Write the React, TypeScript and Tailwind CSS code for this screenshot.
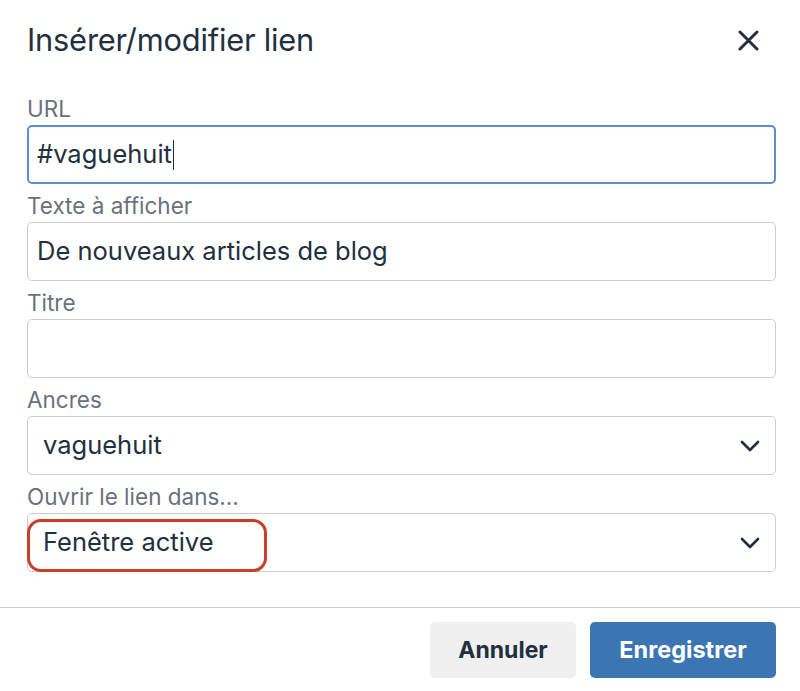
import React from 'react';

const font = { fontFamily: 'Inter, "Noto Sans", "Liberation Sans", sans-serif' };

function Chevron() {
  return (
    <svg width="20" height="12" viewBox="0 0 20 12" fill="none" className="shrink-0">
      <polyline points="2,2 10,10 18,2" stroke="#222f3e" strokeWidth="2.6" strokeLinecap="round" strokeLinejoin="round" />
    </svg>
  );
}

function Label({ children }: { children: React.ReactNode }) {
  return (
    <div className="pt-[8px] pb-[2px] text-[22.5px] leading-[28px] text-[#6a717b]">{children}</div>
  );
}

export default function App() {
  return (
    <div className="w-[800px] h-[691px] bg-white flex flex-col text-[#222f3e]" style={font}>
      <div className="h-[87px] shrink-0 flex items-start justify-between pl-[27px] pr-[41px] pt-[20px]">
        <h1 className="text-[30.8px] leading-[40px] font-normal tracking-[-0.2px]">Insérer/modifier lien</h1>
        <button type="button" aria-label="Fermer" className="mt-[10px]">
          <svg width="21" height="21" viewBox="0 0 21 21" fill="none">
            <path d="M2 2 L19 19 M19 2 L2 19" stroke="#222f3e" strokeWidth="3" strokeLinecap="round" />
          </svg>
        </button>
      </div>

      <div className="flex flex-col pl-[27px] pr-[24px] pb-[35px]">
        <Label>URL</Label>
        <div className="h-[59px] rounded-[5px] border-2 border-[#5b8fcf] flex items-center pl-[8px] text-[25.5px]">
          <span>#vaguehuit</span>
          <span className="w-[1.5px] h-[30px] bg-[#222f3e] ml-[1px]"></span>
        </div>

        <Label>Texte à afficher</Label>
        <div className="h-[59px] rounded-[5px] border border-[#cccccc] flex items-center pl-[9px] text-[25.5px]">
          De nouveaux articles de blog
        </div>

        <Label>Titre</Label>
        <div className="h-[59px] rounded-[5px] border border-[#cccccc]"></div>

        <Label>Ancres</Label>
        <div className="h-[59px] rounded-[5px] border border-[#cccccc] flex items-center justify-between pl-[15px] pr-[15px] text-[25.5px]">
          <span>vaguehuit</span>
          <Chevron />
        </div>

        <Label>Ouvrir le lien dans...</Label>
        <div className="relative h-[59px] rounded-[5px] border border-[#cccccc] flex items-center justify-between pl-[15px] pr-[15px] text-[25.5px]">
          <span>Fenêtre active</span>
          <Chevron />
          <div className="absolute left-[-1px] top-[5px] w-[240px] h-[53px] rounded-[14px] border-[3px] border-[#c9402a]"></div>
        </div>
      </div>

      <div className="border-t border-[#cccccc] flex justify-end gap-[14px] pr-[24px] pt-[14px]">
        <button type="button" className="w-[146px] h-[56px] rounded-[5px] bg-[#f0f0f0] text-[23px] font-bold text-[#222f3e]">
          Annuler
        </button>
        <button type="button" className="w-[186px] h-[56px] rounded-[5px] bg-[#3c76b2] text-[23.5px] font-bold text-white">
          Enregistrer
        </button>
      </div>
    </div>
  );
}
